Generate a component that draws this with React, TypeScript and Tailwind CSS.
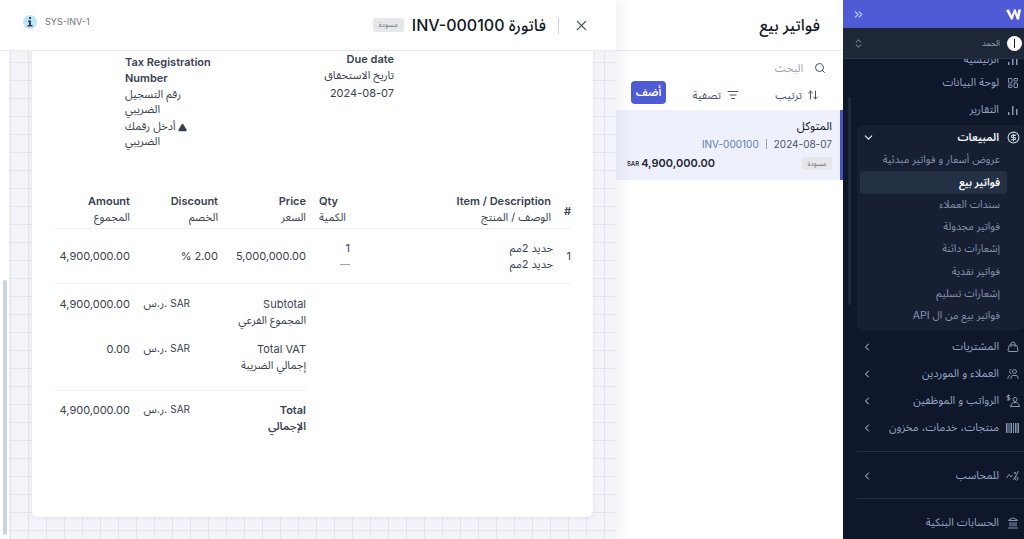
import React from 'react'
import {
  ArrowUpDown, ChevronDown, ChevronLeft, ChevronsRight, ChevronsUpDown, CircleDollarSign,
  Handbag, Landmark, LayoutDashboard, ListFilter, Search, TriangleAlert, Users, X,
} from 'lucide-react'

const subItems = ['عروض أسعار و فواتير مبدئية', 'فواتير بيع', 'سندات العملاء', 'فواتير مجدولة', 'إشعارات دائنة', 'فواتير نقدية', 'إشعارات تسليم', 'فواتير بيع من ال API']

const totals = [
  { en: 'Subtotal', ar: 'المجموع الفرعي', value: '4,900,000.00', box: 'h-[45px]' },
  { en: 'Total VAT', ar: 'إجمالي الضريبة', value: '0.00', box: 'h-[50px]' },
]

const BarsIcon = () => (
  <svg width="12" height="12" viewBox="0 0 12 12" fill="currentColor"><rect x="1" y="8" width="1.5" height="3" /><rect x="5" y="2" width="1.5" height="9" /><rect x="9" y="5" width="1.5" height="6" /></svg>
)

const BarcodeIcon = () => (
  <svg width="14" height="12" viewBox="0 0 14 12" fill="currentColor"><rect x="0" y="1" width="1.5" height="10" /><rect x="2.5" y="1" width="1" height="10" /><rect x="4.5" y="1" width="1.5" height="10" /><rect x="7" y="1" width="1" height="10" /><rect x="9" y="1" width="1.5" height="10" /><rect x="11.5" y="1" width="1.5" height="10" /></svg>
)

const SalaryIcon = () => (
  <svg width="14" height="14" viewBox="0 0 14 14" fill="none" stroke="currentColor" strokeWidth="1"><path d="M4 1.500H2a1 1 0 0 0 0 2.200h1a1 1 0 0 1 0 2.200H.8M2.400 .5v6" /><circle cx="9" cy="5.500" r="2" /><path d="M5 12c0-2.500 1.500-3.500 4-3.500s4 1 4 3.500" /><path d="M4 12.500h10" /></svg>
)

const AccountantIcon = () => (
  <svg width="14" height="12" viewBox="0 0 14 12" fill="none" stroke="currentColor" strokeWidth="1"><path d="M0.500 8 3 4.500 5 7 6.500 5" /><path d="M12.500 1 7.500 10" /><circle cx="10.500" cy="8.500" r="1.500" /><circle cx="9" cy="3" r="0.800" /></svg>
)

const Logo = () => (
  <svg width="15" height="11" viewBox="0 0 15 11" fill="white"><path d="M0 1 3 .5l2.600 6L8 1l1 2.500L6.600 10.500H5L0 1Z" /><path d="M7.500 .5h2.300l1.500 5.500 1-5.500H15l-2 10h-2.200L7.500 .5Z" /></svg>
)

const Currency = () => (
  <div className="w-[60px] flex justify-end gap-[3px] text-[10px] mt-[-1px]"><span className="text-[11px]">ر.س.</span><span>SAR</span></div>
)

const NavRow = ({ label, icon, arrow = true, className = '' }: { label: string; icon: React.ReactNode; arrow?: boolean; className?: string }) => (
  <div className={`flex items-center h-[27px] pr-[3px] pl-[18px] text-[11px] text-[#94a3c0] ${className}`}>
    <span className="w-[16px] flex justify-center text-[#8a97b0]">{icon}</span>
    <span className="mr-[6px] flex-1">{label}</span>
    {arrow && <ChevronLeft size={12} strokeWidth={2} className="text-[#cbd5e1]" />}
  </div>
)

const App = () => {
  return (
    <div className="w-[1024px] h-[539px] flex overflow-hidden bg-white font-['Inter','Noto_Sans_Arabic','DejaVu_Sans',sans-serif] text-[#374151]">
      {/* invoice preview */}
      <div className="w-[616px] h-full flex flex-col relative z-10 bg-white shadow-[4px_0_14px_rgba(30,41,90,0.07)]">
        <div className="h-[51px] shrink-0 flex items-center pl-[23px] pr-[26px] border-b border-[#e8eaf2]">
          <div className="flex items-center mb-[6px]">
            <span className="w-[14px] h-[14px] rounded-full bg-[#bfe6f8] flex items-center justify-center">
              <svg width="6" height="10" viewBox="0 0 6 10" fill="#334155"><rect x="2" y="0" width="2" height="2" /><path d="M1 3.500h3V8h1.500v1.500H.5V8H2V5H1V3.500Z" /></svg>
            </span>
            <span className="ml-[8px] text-[9px] text-[#6b7280]">SYS-INV-1</span>
          </div>
          <div className="ml-auto flex items-center">
            <span className="w-[31px] h-[14px] rounded-[3px] bg-[#e5e7eb] text-[7px] leading-[14px] text-center text-[#6b7280]">مسودة</span>
            <span className="ml-[8px] text-[16px] font-medium text-[#111827]" dir="rtl">فاتورة INV-000100</span>
            <span className="ml-[12px] w-px h-[17px] bg-[#d1d5db]" />
            <X size={17} strokeWidth={1.5} className="ml-[14px] text-[#4b5563]" />
          </div>
        </div>
        <div className="flex-1 min-h-0 flex">
          <div className="w-[9px] shrink-0 pt-[229px] pl-[3px]">
            <div className="w-[4px] h-[255px] rounded-full bg-[#cbd3e6]" />
          </div>
          <div className="flex-1 min-w-0 pl-[23px] pr-[23px] bg-[#f3f4f9] bg-[linear-gradient(#e2e4ec_1px,transparent_1px),linear-gradient(90deg,#e2e4ec_1px,transparent_1px)] bg-[size:18px_18px] bg-[position:1px_11px]">
            <div className="w-[561px] h-[466px] bg-white rounded-b-[6px] shadow-[0_1px_4px_rgba(30,41,90,0.08)] px-[23px]">
              <div className="h-[134px] flex text-[11px] leading-[16px]">
                <div className="ml-[70px] w-[92px] pt-[3px]">
                  <div className="font-semibold">Tax Registration Number</div>
                  <div className="mt-px w-[70px] leading-[15px]" dir="rtl">
                    <div className="text-left">رقم التسجيل الضريبي</div>
                    <div className="mt-[2px] text-left"><TriangleAlert size={9} className="inline ml-[2px] fill-[#374151] text-[#374151]" />أدخل رقمك الضريبي</div>
                  </div>
                </div>
                <div className="ml-[87px] w-[90px] text-right">
                  <div className="font-semibold">Due date</div>
                  <div>تاريخ الاستحقاق</div>
                  <div className="mt-[2px]">2024-08-07</div>
                </div>
              </div>
              {/* items table */}
              <div className="grid grid-cols-[75px_88px_88px_46px_199px_20px] text-[11px] leading-[16px]">
                <div className="h-[44px] pt-[8px] text-right border-b border-[#eef0f5]"><div className="font-semibold">Amount</div><div>المجموع</div></div>
                <div className="h-[44px] pt-[8px] text-right border-b border-[#eef0f5]"><div className="font-semibold">Discount</div><div>الخصم</div></div>
                <div className="h-[44px] pt-[8px] text-right border-b border-[#eef0f5]"><div className="font-semibold">Price</div><div>السعر</div></div>
                <div className="h-[44px] pt-[8px] pl-[13px] border-b border-[#eef0f5]"><div className="font-semibold">Qty</div><div>الكمية</div></div>
                <div className="h-[44px] pt-[8px] text-right border-b border-[#eef0f5]"><div className="font-semibold">Item / Description</div><div>الوصف / المنتج</div></div>
                <div className="h-[44px] pt-[9px] flex items-center justify-end border-b border-[#eef0f5] font-semibold">#</div>
                <div className="h-[55px] flex items-center justify-end border-b border-[#eef0f5]">4,900,000.00</div>
                <div className="h-[55px] flex items-center justify-end border-b border-[#eef0f5]">% 2.00</div>
                <div className="h-[55px] flex items-center justify-end border-b border-[#eef0f5]">5,000,000.00</div>
                <div className="h-[55px] flex flex-col justify-center items-end pr-[2px] border-b border-[#eef0f5]"><span>1</span><span className="w-[10px] h-px bg-[#9ca3af] mt-[8px] mb-[7px]" /></div>
                <div className="h-[55px] flex flex-col justify-center items-end border-b border-[#eef0f5]"><span className="mr-[-2px]">حديد 2مم</span><span className="mr-[-2px]">حديد 2مم</span></div>
                <div className="h-[55px] flex items-center justify-end border-b border-[#eef0f5]">1</div>
              </div>
              {/* totals */}
              <div className="w-[251px] text-[11px] leading-[16px] pt-[12px]">
                {totals.map((row) => (
                  <div key={row.en} className={`flex ${row.box}`}>
                    <div className="w-[75px] text-right">{row.value}</div>
                    <Currency />
                    <div className="flex-1 text-right"><div>{row.en}</div><div>{row.ar}</div></div>
                  </div>
                ))}
                <div className="h-px mt-[-1px] bg-[#eef0f5]" />
                <div className="flex pt-[11px]">
                  <div className="w-[75px] text-right">4,900,000.00</div>
                  <Currency />
                  <div className="flex-1 text-right font-semibold"><div>Total</div><div>الإجمالي</div></div>
                </div>
              </div>
            </div>
          </div>
        </div>
      </div>

      {/* invoices list */}
      <div className="w-[227px] h-full shrink-0" dir="rtl">
        <div className="h-[51px] flex items-center pr-[23px] border-b border-[#e8eaf2] text-[16px] font-medium text-[#111827]">فواتير بيع</div>
        <div className="h-[29px] flex items-center pr-[17px] pt-[5px] text-[11px] text-[#9ca3af]">
          <Search size={12} className="text-[#4b5563]" />
          <span className="mr-[11px]">البحث</span>
        </div>
        <div className="h-[30px] flex items-center pr-[24px] text-[11px] text-[#4b5563] relative">
          <ArrowUpDown size={12} />
          <span className="absolute right-[41px]">ترتيب</span>
          <ListFilter size={12} className="absolute right-[104px]" />
          <span className="absolute right-[122px]">تصفية</span>
          <span className="absolute left-[15px] top-[1px] w-[35px] h-[23px] rounded-[4px] bg-[#4f5bd5] text-white font-semibold text-center leading-[23px]">أضف</span>
        </div>
        <div className="h-[70px] bg-[#eef1fb] border-r-[3px] border-[#4551c6] pr-[8px] pl-[11px] pt-[8px]">
          <div className="text-[11.5px] text-[#111827] leading-[16px]">المتوكل</div>
          <div className="flex items-center text-[10px] leading-[16px] mt-[2px]">
            <span className="text-[#4b5563]">2024-08-07</span>
            <span className="mx-[7px] w-px h-[10px] bg-[#9ca3af]" />
            <span className="text-[#5b7bb8]">INV-000100</span>
          </div>
          <div className="flex items-center justify-between mt-[3px]">
            <span className="w-[30px] h-[13px] rounded-[3px] bg-[#e5e7eb] text-[7px] leading-[13px] text-center text-[#6b7280]">مسودة</span>
            <span className="text-[11px] font-semibold text-[#1f2937] flex items-center gap-[2px]" dir="ltr"><span className="text-[6px]">SAR</span>4,900,000.00</span>
          </div>
        </div>
      </div>

      {/* sidebar */}
      <div className="w-[181px] h-full shrink-0 flex flex-col bg-[#0f172a]" dir="rtl">
        <div className="h-[28px] shrink-0 bg-[#4f5bd5] flex items-center justify-between pr-[3px] pl-[9px] text-[#c7d2fe]">
          <Logo />
          <ChevronsRight size={13} />
        </div>
        <div className="h-[31px] shrink-0 flex items-center pr-[2px] pl-[10px] bg-[#1e2737] border-b border-[#2b3547]">
          <span className="w-[15px] h-[15px] rounded-full bg-white flex items-center justify-center"><span className="w-[1.5px] h-[9px] bg-[#111827]" /></span>
          <span className="mr-[7px] text-[8px] text-[#94a3b8] flex-1">الحمد</span>
          <ChevronsUpDown size={11} className="text-[#94a3b8]" />
        </div>
        <div className="flex-1 min-h-0 overflow-hidden relative">
          <div className="absolute left-[5px] top-[38px] w-[3px] h-[208px] rounded-full bg-[#1e293b]" />
          <div className="mt-[-13px] flex flex-col">
            <NavRow label="الرئيسية" icon={<BarsIcon />} arrow={false} className="mb-[-4px]" />
            <NavRow label="لوحة البيانات" icon={<LayoutDashboard size={12} />} arrow={false} />
            <NavRow label="التقارير" icon={<BarsIcon />} arrow={false} />
            <div className="mt-[2px] ml-[14px] h-[205px] rounded-[5px] bg-[#172033]">
              <div className="flex items-center h-[24px] pr-[3px] pl-[5px] text-[11px] font-semibold text-[#f1f5f9]">
                <span className="w-[16px] flex justify-center"><CircleDollarSign size={13} className="text-[#cbd5e1]" /></span>
                <span className="mr-[6px] flex-1">المبيعات</span>
                <ChevronDown size={13} />
              </div>
              {subItems.map((item, idx) => (
                <div key={idx} className={`h-[22.3px] flex items-center text-[10.5px] ${idx === 1 ? 'mr-[17px] ml-[3px] pr-[7px] rounded-[4px] bg-[#243044] text-white font-semibold' : 'pr-[24px] text-[#8492ad]'}`}>{item}</div>
              ))}
            </div>
            <NavRow label="المشتريات" icon={<Handbag size={12} />} className="mt-[3px]" />
            <NavRow label="العملاء و الموردين" icon={<Users size={12} className="-scale-x-100" />} />
            <NavRow label="الرواتب و الموظفين" icon={<SalaryIcon />} />
            <NavRow label="منتجات، خدمات، مخزون" icon={<BarcodeIcon />} />
            <div className="h-px bg-[#243044] ml-[14px] mt-[10px] mb-[10px]" />
            <NavRow label="للمحاسب" icon={<AccountantIcon />} />
            <div className="h-px bg-[#243044] ml-[14px] mt-[9px] mb-[10px]" />
            <NavRow label="الحسابات البنكية" icon={<Landmark size={12} />} arrow={false} />
          </div>
        </div>
      </div>
    </div>
  )
}

export default App
